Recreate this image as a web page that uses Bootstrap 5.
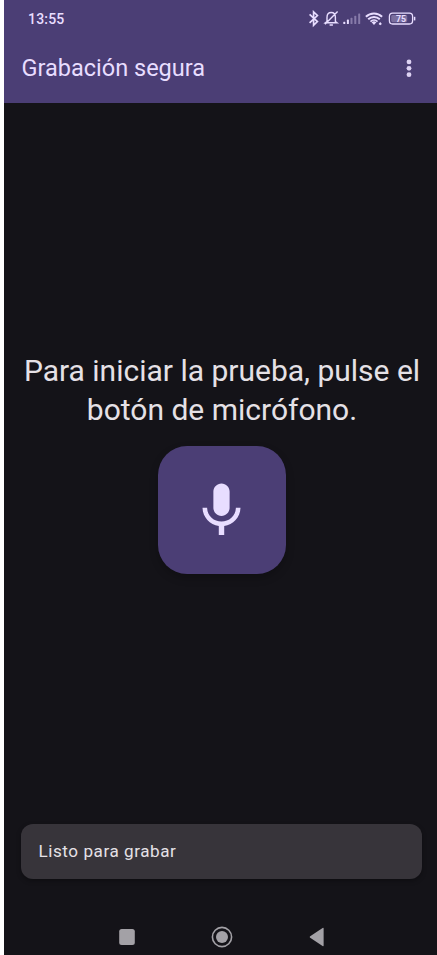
<!DOCTYPE html>
<html lang="es">
<head>
<meta charset="utf-8">
<meta name="viewport" content="width=device-width, initial-scale=1">
<title>Grabación segura</title>
<link href="https://cdn.jsdelivr.net/npm/bootstrap@5.3.0/dist/css/bootstrap.min.css" rel="stylesheet">
<style>
body{background:#fff;font-family:Roboto,"Liberation Sans",sans-serif;padding-left:4px}
.screen{height:955px;background:#141318;overflow:hidden}
.topbar{height:102.5px;background:#4b3e75;color:#e8ddff}
.status{height:38px;padding:0 21px 0 24px}
.clock{font-size:14px;font-weight:500;line-height:18px;letter-spacing:.2px}
.title-row{height:60px;padding:0 17px 0 17.5px}
.app-title{font-size:23.5px;line-height:30px;font-weight:400}
.prompt{font-size:30px;line-height:38.5px;color:#e5e1e6;font-weight:400;margin-top:249.5px;padding-left:3px;white-space:nowrap}
.mic-btn{width:128px;height:128px;border-radius:29px;background:#4b3e75;margin-top:17px;margin-left:2.5px;box-shadow:0 4px 8px rgba(0,0,0,.22)}
.toast-bar{height:55px;margin:249.5px 15px 0 17px;border-radius:12px;background:#37343a;color:#e5e1e6;font-size:17.1px;letter-spacing:.55px;padding-left:17.5px;padding-top:1px;box-shadow:0 2px 5px rgba(0,0,0,.3)}
.sysnav{margin-top:47px;padding-left:114px}
svg{display:block;flex:none}
</style>
<script src="https://cdn.jsdelivr.net/npm/bootstrap@5.3.0/dist/js/bootstrap.bundle.min.js"></script>
</head>
<body>
<div class="screen d-flex flex-column">
  <header class="topbar flex-shrink-0">
    <div class="status d-flex align-items-center justify-content-between">
      <span class="clock">13:55</span>
      <svg width="108" height="18" viewBox="308 10 108 18" fill="none" stroke="#e8ddff">
        <path d="M309.6 14.3 317.4 21.6 313.6 25.2V11.9L317.4 15.5 309.6 22.8" stroke-width="1.7"/>
        <path d="M327 21.6v-4.2c0-3 1.7-4.9 4.2-4.9s4.2 1.900 4.2 4.900v4.200l1.600 1.200h-11.600zM329.600 25h3.300M337.600 11.600 325 24.200" stroke-width="1.4"/>
        <g stroke="none" fill="#e8ddff">
          <rect x="343.3" y="21.8" width="2" height="2.2" rx=".6"/>
          <rect x="346.9" y="19.6" width="2" height="4.4" rx=".6"/>
          <g opacity=".38"><rect x="350.5" y="17.8" width="2" height="6.2" rx=".6"/>
          <rect x="354.3" y="15.8" width="2" height="8.2" rx=".6"/>
          <rect x="358.2" y="13.4" width="2" height="10.6" rx=".6"/></g>
          <path d="M371.6 22.3 374 25l2.4-2.7a3.6 3.6 0 0 0-4.8 0zM378.6 24l1.6-2 1.7 2-1.7 1.3z"/>
        </g>
        <path d="M365.9 16.7a11.7 11.7 0 0 1 16.2 0M368.2 19.2a8.4 8.4 0 0 1 11.6 0" stroke-width="2"/>
        <path d="M370.5 21.6a5 5 0 0 1 7 0" stroke-width="1.7"/>
        <rect x="389.4" y="13.2" width="23.2" height="10.8" rx="3.2" stroke-width="1.3"/>
        <rect x="391.2" y="15" width="16" height="7.2" rx="1.4" fill="#e8ddff" opacity=".3" stroke="none"/>
        <path d="M414.6 16.8v3.6" stroke-width="1.5"/>
        <text x="401" y="21.8" text-anchor="middle" font-family="Roboto,sans-serif" font-size="8.8" font-weight="700" fill="#e8ddff" stroke="none">75</text>
      </svg>
    </div>
    <div class="title-row d-flex align-items-center justify-content-between">
      <h1 class="app-title m-0">Grabación segura</h1>
      <svg width="22" height="22" viewBox="0 0 22 22" fill="#ddd2f3"><circle cx="11" cy="4.9" r="2.4"/><circle cx="11" cy="11.3" r="2.4"/><circle cx="11" cy="17.7" r="2.4"/></svg>
    </div>
  </header>
  <main class="d-flex flex-column align-items-center">
    <p class="prompt text-center mb-0">Para iniciar la prueba, pulse el<br>botón de micrófono.</p>
    <button type="button" class="mic-btn btn border-0 p-0 d-flex align-items-center justify-content-center" aria-label="Grabar">
      <svg width="65" height="65" viewBox="0 0 24 24" fill="#e8ddff"><path d="M12 14c1.66 0 2.99-1.34 2.99-3L15 5c0-1.66-1.34-3-3-3S9 3.34 9 5v6c0 1.66 1.34 3 3 3zm5.3-3c0 3-2.54 5.1-5.3 5.1S6.7 14 6.7 11H5c0 3.41 2.72 6.23 6 6.72V21h2v-3.28c3.28-.48 6-3.3 6-6.72h-1.7z"/></svg>
    </button>
  </main>
  <div class="toast-bar d-flex align-items-center flex-shrink-0" role="status">Listo para grabar</div>
  <nav class="sysnav d-flex">
    <svg width="208" height="22" viewBox="118 926 208 22" fill="#a3a1a6">
      <rect x="119.2" y="929" width="15.6" height="16" rx="2.5"/>
      <circle cx="222" cy="937" r="9.6" fill="none" stroke="#a3a1a6" stroke-width="1.6"/><circle cx="222" cy="937" r="6"/>
      <path d="M310.2 936.2 322.6 928q1-.6 1 .6v16.8q0 1.2-1 .6L310.2 937.8q-1.1-.8 0-1.6z"/>
    </svg>
  </nav>
</div>
</body>
</html>
